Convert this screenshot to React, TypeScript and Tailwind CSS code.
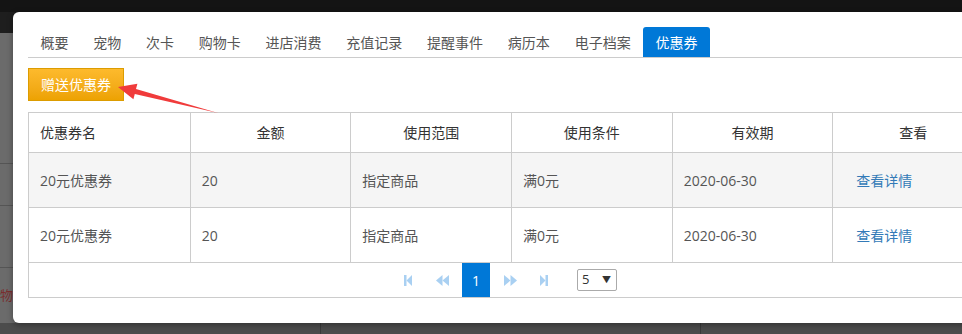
import React from 'react';

const tabs = ['概要', '宠物', '次卡', '购物卡', '进店消费', '充值记录', '提醒事件', '病历本', '电子档案', '优惠券'];
const heads = ['优惠券名', '金额', '使用范围', '使用条件', '有效期', '查看'];
const rows = [
    ['20元优惠券', '20', '指定商品', '满0元', '2020-06-30'],
    ['20元优惠券', '20', '指定商品', '满0元', '2020-06-30'],
];

const font = "font-['Open_Sans','Noto_Sans_CJK_SC',sans-serif]";

const PagerIcon: React.FC<{ kind: 'first' | 'prev' | 'next' | 'last' }> = ({ kind }) => {
    const narrow = kind === 'first' || kind === 'last';
    return (
        <svg width={narrow ? 8 : 13} height="11" viewBox={narrow ? '0 0 8 11' : '0 0 13 11'} className="fill-[#a9d0f2]">
            {kind === 'first' && (
                <>
                    <rect x="0" y="0" width="2.5" height="11" />
                    <polygon points="8,0 8,11 2.5,5.5" />
                </>
            )}
            {kind === 'prev' && (
                <>
                    <polygon points="6.5,0 6.5,11 0,5.5" />
                    <polygon points="13,0 13,11 6.5,5.5" />
                </>
            )}
            {kind === 'next' && (
                <>
                    <polygon points="0,0 0,11 6.5,5.5" />
                    <polygon points="6.5,0 6.5,11 13,5.5" />
                </>
            )}
            {kind === 'last' && (
                <>
                    <polygon points="0,0 0,11 5.5,5.5" />
                    <rect x="5.5" y="0" width="2.5" height="11" />
                </>
            )}
        </svg>
    );
};

export default function App() {
    return (
        <div className={`relative w-[962px] h-[334px] overflow-hidden bg-[#6b6b6b] ${font}`}>
            {/* page behind the backdrop */}
            <div className="h-[12px] bg-[#141414]" />
            <div className="h-[21px] bg-[#1e1e1e]" />
            <div className="h-[131px] border-b border-[#555]" />
            <div className="h-[42px] border-b border-[#555]" />
            <div className="h-[62px] border-b border-[#555]" />
            <div className="h-[55px] flex items-center">
                <span className="text-[13px] text-[#7a2e2e]">物</span>
            </div>
            <div className="h-[11px] flex bg-[#4c4c4c]">
                <div className="w-[321px] border-r border-[#3a3a3a]" />
                <div className="w-[380px] border-r border-[#3a3a3a]" />
            </div>

            {/* dialog */}
            <div className="absolute left-[13px] top-[12px] w-[1000px] h-[311px] bg-white rounded-[6px] shadow-[0_2px_6px_rgba(0,0,0,0.35)] pl-[15px] pt-[15px]">
                <div className="flex w-[966px] border-b border-[#ccc] h-[31px]">
                    {tabs.map((t, i) => (
                        <div
                            key={t}
                            className={
                                i === tabs.length - 1
                                    ? 'h-[30px] px-[12.4px] flex items-center text-[14px] text-white bg-[#0078d7] rounded-t-[3px]'
                                    : 'h-[30px] px-[12.4px] flex items-center text-[14px] text-[#555]'
                            }
                        >
                            {t}
                        </div>
                    ))}
                </div>

                <button className="mt-[10px] w-[96px] h-[33px] border border-[#dc9c00] bg-gradient-to-b from-[#fdba2c] to-[#eda201] text-white text-[14px] text-left pl-3">
                    赠送优惠券
                </button>

                <div className="mt-[11px] w-[966px] border border-[#ccc] text-[14px]">
                    <div className="grid grid-cols-6 h-[40px] border-b border-[#ccc] text-[#333]">
                        {heads.map((h, i) => (
                            <div
                                key={h}
                                className={
                                    i === 0
                                        ? 'flex items-center pl-[11px]'
                                        : 'flex items-center justify-center border-l border-[#ccc]'
                                }
                            >
                                {h}
                            </div>
                        ))}
                    </div>
                    {rows.map((r, ri) => (
                        <div
                            key={ri}
                            className={
                                ri === 0
                                    ? 'grid grid-cols-6 h-[55px] border-b border-[#ccc] bg-[#f5f5f5] text-[#555]'
                                    : 'grid grid-cols-6 h-[55px] border-b border-[#ccc] text-[#555]'
                            }
                        >
                            {r.map((c, ci) => (
                                <div key={ci} className={ci === 0 ? 'flex items-center pl-[11px]' : 'flex items-center pl-[11px] border-l border-[#ccc]'}>
                                    {c}
                                </div>
                            ))}
                            <div className="flex items-center pl-[23px] border-l border-[#ccc] text-[#337ab7]">查看详情</div>
                        </div>
                    ))}
                    <div className="h-[34px] flex items-center justify-center pr-[14px]">
                        <div className="w-[34px] h-[34px] flex items-center justify-center"><PagerIcon kind="first" /></div>
                        <div className="w-[34px] h-[34px] flex items-center justify-center"><PagerIcon kind="prev" /></div>
                        <div className="ml-[3px] w-[28px] h-[34px] flex items-center justify-center bg-[#0078d7] text-white text-[14px]">1</div>
                        <div className="ml-[3px] w-[34px] h-[34px] flex items-center justify-center"><PagerIcon kind="next" /></div>
                        <div className="w-[34px] h-[34px] flex items-center justify-center"><PagerIcon kind="last" /></div>
                        <div className="ml-[16px] w-[40px] h-[22px] border border-[#aaa] rounded-[2px] flex items-center justify-between pl-[4px] pr-[5px] text-[13px] text-[#333]">
                            <span>5</span>
                            <span className="text-[9px]">▼</span>
                        </div>
                    </div>
                </div>

                {/* annotation arrow */}
                <svg className="absolute left-0 top-0 pointer-events-none" width="240" height="120" viewBox="13 12 240 120">
                    <polygon
                        points="118,87 137.4,83.8 136,89.1 218,113 134.8,93.9 133.4,99.2"
                        fill="#f03b3b"
                    />
                </svg>
            </div>
        </div>
    );
}
